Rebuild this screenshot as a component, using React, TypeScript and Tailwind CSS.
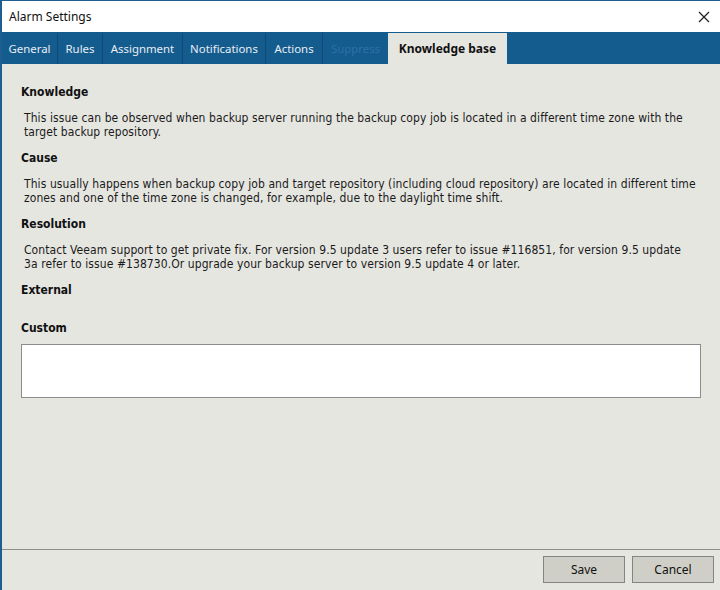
import React from "react";

const tabs = [
  { label: "General", w: 58 },
  { label: "Rules", w: 45 },
  { label: "Assignment", w: 80 },
  { label: "Notifications", w: 83 },
  { label: "Actions", w: 57 },
];

export default function App() {
  const body = "text-[12px] leading-[14px] tracking-[0.08px] text-[#1a1a1a] whitespace-nowrap pl-[22px]";
  const head = "text-[12px] leading-[14px] font-bold text-[#111] pl-[19px]";
  return (
    <div
      className="w-[720px] h-[590px] bg-[#e6e6e1] flex flex-col border-l-[2px] border-t border-[#1d5f92] overflow-hidden"
      style={{ fontFamily: "'DejaVu Sans Condensed', 'DejaVu Sans', sans-serif" }}
    >
      {/* title bar */}
      <div className="h-[31px] bg-white flex items-center justify-between pl-[7px] pr-[8px] shrink-0">
        <span className="text-[12px] text-[#111]" style={{ fontFamily: "'Noto Sans', sans-serif" }}>
          Alarm Settings
        </span>
        <svg width="12" height="12" viewBox="0 0 12 12" className="mr-[2px]">
          <path d="M1 1 L11 11 M11 1 L1 11" stroke="#222" strokeWidth="1.3" />
        </svg>
      </div>
      {/* tabs */}
      <div
        className="h-[32px] bg-[#155c8e] flex items-stretch shrink-0 pt-[1px]"
        style={{ fontFamily: "'Noto Sans', sans-serif" }}
      >
        {tabs.map((t) => (
          <div
            key={t.label}
            className="flex items-center justify-center text-[11.4px] text-[#e8eef4] border-r border-[#0f4a76]"
            style={{ width: t.w - (t.label === "General" ? 2 : 0) }}
          >
            {t.label}
          </div>
        ))}
        <div className="w-[65px] flex items-center justify-center text-[11.4px] text-[#2c70a6]">Suppress</div>
        <div className="w-[119px] flex items-center justify-center text-[12px] font-bold text-[#111] bg-[#e6e6e1]">
          Knowledge base
        </div>
      </div>
      {/* content */}
      <div className="flex-1 flex flex-col pt-[21px]">
        <div className={head}>Knowledge</div>
        <div className={`${body} mt-[12px]`}>
          This issue can be observed when backup server running the backup copy job is located in a different time zone with the
          <br />
          target backup repository.
        </div>
        <div className={`${head} mt-[12px]`}>Cause</div>
        <div className={`${body} mt-[12px]`}>
          This usually happens when backup copy job and target repository (including cloud repository) are located in different time
          <br />
          zones and one of the time zone is changed, for example, due to the daylight time shift.
        </div>
        <div className={`${head} mt-[12px]`}>Resolution</div>
        <div className={`${body} mt-[12px]`}>
          Contact Veeam support to get private fix. For version 9.5 update 3 users refer to issue #116851, for version 9.5 update
          <br />
          3a refer to issue #138730.Or upgrade your backup server to version 9.5 update 4 or later.
        </div>
        <div className={`${head} mt-[12px]`}>External</div>
        <div className={`${head} mt-[24px]`}>Custom</div>
        <div className="ml-[19px] mt-[9px] w-[680px] h-[54px] bg-white border border-[#8c8c8c]" />
      </div>
      {/* footer */}
      <div className="h-[41px] shrink-0 border-t border-[#8e8e8a] flex items-center justify-end gap-[7px] pr-[6px] pb-[1px]">
        <button className="w-[82px] h-[27px] pt-[1px] bg-[#cfcfc7] border border-[#85857f] text-[12px] text-[#111]" style={{ fontFamily: "'Noto Sans', sans-serif" }}>
          Save
        </button>
        <button className="w-[82px] h-[27px] pt-[1px] bg-[#cfcfc7] border border-[#85857f] text-[12px] text-[#111]" style={{ fontFamily: "'Noto Sans', sans-serif" }}>
          Cancel
        </button>
      </div>
    </div>
  );
}
